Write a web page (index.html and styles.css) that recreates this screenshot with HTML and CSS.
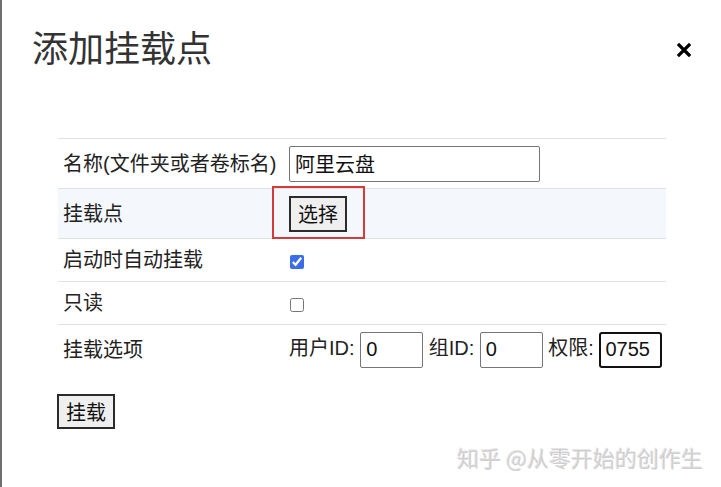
FILE: index.html
```html
<!doctype html>
<html lang="zh-CN">
<head>
	<meta charset="UTF-8">
	<title>添加挂载点</title>
	<link rel="stylesheet" href="styles.css">
</head>
<body>

<div class="dialog">

	<div class="dialog-head">
		<h1 class="dialog-title">添加挂载点</h1>
		<svg class="dialog-close" width="14" height="14" viewBox="0 0 14 14"><path d="M2 2 L12 12 M12 2 L2 12" stroke="#000" stroke-width="3.2" stroke-linecap="square"/></svg>
	</div>

	<table class="mount-table">
		<tr>
			<td class="lcol">名称(文件夹或者卷标名)</td>
			<td class="rcol"><input class="text-input wide" type="text" value="阿里云盘"></td>
		</tr>
		<tr class="row-hover">
			<td class="lcol">挂载点</td>
			<td class="rcol"><span class="pick"><button class="plain-btn">选择</button></span></td>
		</tr>
		<tr class="row-short">
			<td class="lcol">启动时自动挂载</td>
			<td class="rcol"><input class="check" type="checkbox" checked></td>
		</tr>
		<tr class="row-short">
			<td class="lcol">只读</td>
			<td class="rcol"><input class="check" type="checkbox"></td>
		</tr>
		<tr>
			<td class="lcol">挂载选项</td>
			<td class="rcol">
				用户ID: <input class="text-input small" type="text" value="0">
				组ID: <input class="text-input small" type="text" value="0">
				权限: <input class="text-input small focused" type="text" value="0755">
			</td>
		</tr>
	</table>

	<div class="dialog-foot">
		<button class="plain-btn">挂载</button>
	</div>

	<div class="watermark">知乎 @从零开始的创作生</div>

</div>

</body>
</html>
```

FILE: styles.css
```css
body { margin: 0; background: #ffffff; font-family: "Liberation Sans", "Noto Sans CJK SC", sans-serif; color: #222222; }
.dialog { position: relative; height: 487px; box-sizing: border-box; border-left: 2px solid #6f6f6f; padding: 0 30px 0 30px; overflow: hidden; }
.dialog-head { display: flex; justify-content: space-between; align-items: center; padding-top: 21px; height: 50px; }
.dialog-title { margin: 0; font-size: 36px; font-weight: normal; line-height: 50px; color: #333333; font-family: "Noto Sans CJK SC", sans-serif; }
.dialog-close { margin-right: 0px; margin-top: 8px; }

.mount-table { margin-top: 67px; margin-left: 26px; width: 608px; border-collapse: collapse; font-size: 20px; }
.mount-table td { border-top: 1px solid #dee2e6; padding: 0; vertical-align: middle; height: 49px; line-height: 24px; }
.mount-table .lcol { width: 226px; padding-left: 5px; }
.mount-table .rcol { }
.mount-table .row-hover td { background-color: #f4f8fd; }
.mount-table .row-short td { height: 42px; }

.text-input { font-family: "Liberation Sans", "Noto Sans CJK SC", sans-serif; font-size: 20px; height: 36px; box-sizing: border-box; border: 1px solid #767676; border-radius: 2px; padding: 0 5px; color: #111111; vertical-align: middle; }
.text-input.wide { width: 251px; }
.text-input.small { width: 63px; }
.text-input.focused { border: 2px solid #111111; border-radius: 3px; padding: 0 4px; }

.check { width: 14px; height: 14px; margin: 0 0 0 1px; accent-color: #3b6ee6; vertical-align: middle; }

.plain-btn { font-family: "Noto Sans CJK SC", sans-serif; font-size: 20px; line-height: 26px; height: 36px; padding: 0 7px; background: #efefef; border: 2px solid #2b2b2b; border-radius: 0; color: #111111; vertical-align: middle; }
.pick { position: relative; display: inline-block; vertical-align: middle; }
.pick::after { content: ""; position: absolute; left: -17px; top: -10px; width: 89px; height: 49px; border: 2px solid #d63b3b; }

.dialog-foot { margin-top: 20px; margin-left: 25px; }
.dialog-foot .plain-btn { height: 35px; }

.watermark { position: absolute; right: 18px; bottom: 14px; font-size: 22px; color: #d0d0d0; text-shadow: 1px 1px 0 #ffffff, -1px -1px 0 #e6e6e6; font-family: "Noto Sans CJK SC", sans-serif; }
```
